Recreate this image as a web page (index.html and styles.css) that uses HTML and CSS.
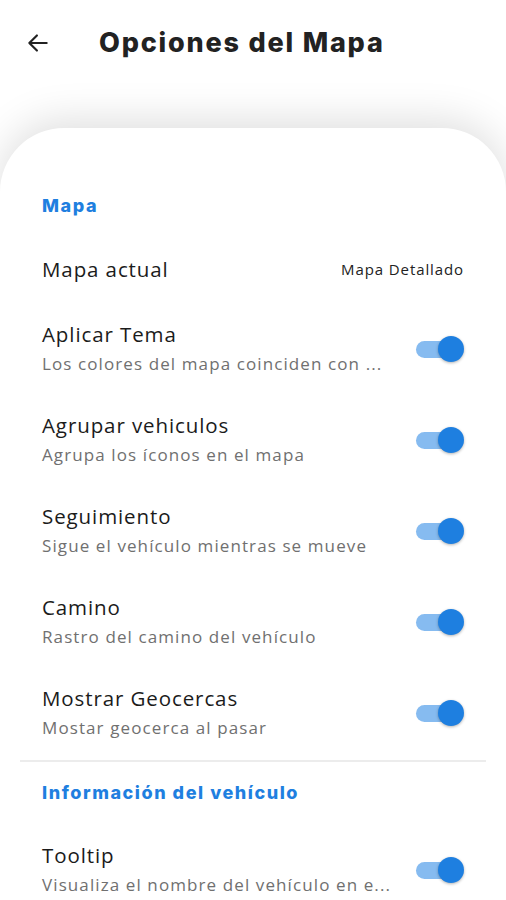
FILE: index.html
```html
<!DOCTYPE html>
<html lang="es">
  <head>
    <meta charset="UTF-8" />
    <title>Opciones del Mapa</title>
    <link rel="stylesheet" href="styles.css">
  </head>
  <body>
    <div class="header">
      <svg class="back" width="26" height="26" viewBox="0 0 24 24">
        <path d="M20 12H4M11 5l-7 7 7 7" fill="none" stroke="#222" stroke-width="2" stroke-linecap="round" stroke-linejoin="round"/>
      </svg>
      <h1>Opciones del Mapa</h1>
    </div>

    <div class="card">
      <div class="section">Mapa</div>

      <div class="row single">
        <div class="texts"><div class="title">Mapa actual</div></div>
        <div class="value">Mapa Detallado</div>
      </div>

      <div class="row">
        <div class="texts">
          <div class="title">Aplicar Tema</div>
          <div class="sub">Los colores del mapa coinciden con ...</div>
        </div>
        <div class="switch"><span class="thumb"></span></div>
      </div>

      <div class="row">
        <div class="texts">
          <div class="title">Agrupar vehiculos</div>
          <div class="sub">Agrupa los íconos en el mapa</div>
        </div>
        <div class="switch"><span class="thumb"></span></div>
      </div>

      <div class="row">
        <div class="texts">
          <div class="title">Seguimiento</div>
          <div class="sub">Sigue el vehículo mientras se mueve</div>
        </div>
        <div class="switch"><span class="thumb"></span></div>
      </div>

      <div class="row">
        <div class="texts">
          <div class="title">Camino</div>
          <div class="sub">Rastro del camino del vehículo</div>
        </div>
        <div class="switch"><span class="thumb"></span></div>
      </div>

      <div class="row">
        <div class="texts">
          <div class="title">Mostrar Geocercas</div>
          <div class="sub">Mostar geocerca al pasar</div>
        </div>
        <div class="switch"><span class="thumb"></span></div>
      </div>

      <div class="divider"></div>

      <div class="section second">Información del vehículo</div>

      <div class="row">
        <div class="texts">
          <div class="title">Tooltip</div>
          <div class="sub">Visualiza el nombre del vehículo en e...</div>
        </div>
        <div class="switch"><span class="thumb"></span></div>
      </div>
    </div>
  </body>
</html>
```

FILE: styles.css
```css
* {
  padding: 0px;
  margin: 0px;
  box-sizing: border-box;
}
body {
  background: #fff;
  font-family: "Open Sans", "Noto Sans", sans-serif;
  color: #1b1b1b;
  overflow: hidden;
}
.header {
  height: 85px;
  display: flex;
  align-items: center;
  padding-left: 25px;
}
.back {
  margin-right: 48px;
}
.header h1 {
  font-family: Inter, "Noto Sans", sans-serif;
  font-weight: 800;
  font-size: 27px;
  letter-spacing: 1.8px;
  color: #222;
}
.card {
  margin-top: 43px;
  background: #fff;
  border-radius: 64px 64px 0 0;
  box-shadow: 0 -8px 40px rgba(0, 0, 0, 0.13);
  padding: 0 42px;
  height: 800px;
}
.section {
  font-family: Inter, "Noto Sans", sans-serif;
  font-weight: 800;
  font-size: 18px;
  line-height: 20px;
  color: #1f7fe0;
  letter-spacing: 1.55px;
  padding-top: 68px;
  height: 107px;
}
.section.second {
  padding-top: 21px;
  height: 62px;
}
.row {
  height: 91px;
  display: flex;
  align-items: center;
  justify-content: space-between;
}
.row.single {
  height: 68px;
}
.title {
  font-size: 20.5px;
  line-height: 30px;
  letter-spacing: 0.9px;
  color: #1b1b1b;
}
.sub {
  font-size: 17px;
  line-height: 30px;
  letter-spacing: 1.1px;
  color: #707070;
}
.value {
  font-size: 15px;
  letter-spacing: 0.9px;
  color: #222;
}
.switch {
  position: relative;
  width: 44px;
  height: 17px;
  border-radius: 9px;
  background: #86bbf0;
  margin-right: 4px;
  margin-top: 2px;
}
.thumb {
  position: absolute;
  right: -4px;
  top: -5px;
  width: 26px;
  height: 26px;
  border-radius: 50%;
  background: #1e7fe0;
  box-shadow: 0 1px 3px rgba(0, 0, 0, 0.3);
}
.divider {
  height: 2px;
  background: #ececec;
  margin: 2px -22px 0;
}
```
